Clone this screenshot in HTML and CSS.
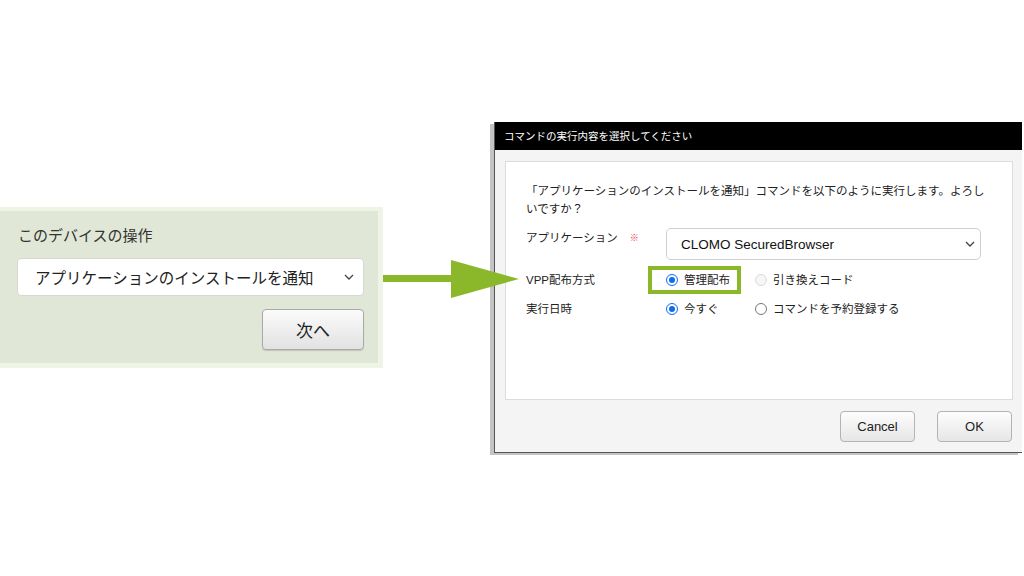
FILE: index.html
```html
<!DOCTYPE html>
<html lang="ja">
<head>
<meta charset="utf-8">
<title>コマンド</title>
<link rel="stylesheet" href="styles.css">
</head>
<body>
<div class="stage">
  <section class="device-panel">
    <div class="device-title">このデバイスの操作</div>
    <div class="device-select">
      <span>アプリケーションのインストールを通知</span>
      <svg class="chev" width="10" height="6" viewBox="0 0 10 6"><path d="M1 1l4 4 4-4" fill="none" stroke="#444" stroke-width="1.3"/></svg>
    </div>
    <div class="device-actions"><button class="next-btn">次へ</button></div>
  </section>

  <div class="arrow">
    <div class="arrow-line"></div>
    <div class="arrow-head"></div>
  </div>

  <section class="dialog">
    <header class="dialog-head">コマンドの実行内容を選択してください</header>
    <div class="dialog-body">
      <p class="message">「アプリケーションのインストールを通知」コマンドを以下のように実行します。よろしいですか？</p>
      <div class="form-row">
        <div class="label">アプリケーション<span class="req">※</span></div>
        <div class="app-select">
          <span>CLOMO SecuredBrowser</span>
          <svg class="chev" width="10" height="6" viewBox="0 0 10 6"><path d="M1 1l4 4 4-4" fill="none" stroke="#444" stroke-width="1.3"/></svg>
        </div>
      </div>
      <div class="form-row radio-row">
        <div class="label">VPP配布方式</div>
        <div class="options">
          <span class="opt highlight"><span class="radio on"></span>管理配布</span>
          <span class="opt"><span class="radio disabled"></span>引き換えコード</span>
        </div>
      </div>
      <div class="form-row radio-row">
        <div class="label">実行日時</div>
        <div class="options">
          <span class="opt"><span class="radio on"></span>今すぐ</span>
          <span class="opt"><span class="radio"></span>コマンドを予約登録する</span>
        </div>
      </div>
    </div>
    <footer class="dialog-foot">
      <button class="btn">Cancel</button>
      <button class="btn">OK</button>
    </footer>
  </section>
</div>
</body>
</html>
```

FILE: styles.css
```css
* { box-sizing: border-box; }
html, body { margin: 0; padding: 0; background: #fff; }
body {
  font-family: "Liberation Sans", "Noto Sans CJK JP", sans-serif;
  color: #222;
}
.stage {
  position: relative;
  width: 1024px;
  height: 576px;
  display: flex;
  align-items: flex-start;
}

/* left panel */
.device-panel {
  margin-top: 207px;
  width: 383px;
  height: 161px;
  background: #e1e7d6;
  border: 4px solid #eff4e4;
  border-left: 0;
  border-right-width: 5px;
  border-bottom-width: 5px;
  padding: 15px 14px 0 17px;
}
.device-title {
  font-size: 15px;
  line-height: 20px;
  color: #333;
  padding-left: 1px;
}
.device-select {
  margin-top: 12px;
  height: 38px;
  background: #fff;
  border: 1px solid #d6d9d0;
  border-radius: 4px;
  display: flex;
  align-items: center;
  justify-content: space-between;
  padding: 0 9px 0 17px;
  font-size: 15.5px;
  color: #222;
}
.device-actions {
  display: flex;
  justify-content: flex-end;
  margin-top: 13px;
}
.next-btn {
  width: 102px;
  height: 41px;
  font-family: inherit;
  font-size: 17px;
  color: #222;
  background: linear-gradient(#fbfbfb, #e2e2e2);
  border: 1px solid #a9a9a9;
  border-radius: 4px;
  box-shadow: 0 1px 1px rgba(0,0,0,0.15);
}

/* arrow overlay */
.arrow {
  position: absolute;
  left: 383px;
  top: 259px;
  width: 136px;
  height: 39px;
  display: flex;
  align-items: center;
  z-index: 2;
}
.arrow-line {
  width: 68px;
  height: 7px;
  background: #8ab82a;
}
.arrow-head {
  width: 0;
  height: 0;
  border-top: 19.5px solid transparent;
  border-bottom: 19.5px solid transparent;
  border-left: 68px solid #8ab82a;
}

/* dialog */
.dialog {
  margin-left: 111px;
  margin-top: 122px;
  width: 528px;
  height: 331px;
  background: #f4f4f4;
  border-left: 1px solid #555;
  border-bottom: 1px solid #555;
  box-shadow: -4px 2px 0 #c4c4c4;
  display: flex;
  flex-direction: column;
}
.dialog-head {
  height: 28px;
  background: #000;
  color: #fff;
  font-size: 10.5px;
  line-height: 28px;
  padding-left: 9px;
}
.dialog-body {
  margin: 11px 9px 0 10px;
  height: 239px;
  background: #fff;
  border: 1px solid #dcdcdc;
  padding: 20px 20px 0 20px;
  font-size: 11.5px;
  color: #222;
}
.message {
  margin: 0 0 10px;
  line-height: 18px;
}
.form-row {
  display: flex;
  align-items: flex-start;
}
.label {
  width: 140px;
  line-height: 20px;
  flex: none;
}
.req {
  color: #e23b3b;
  font-size: 9px;
  margin-left: 12px;
  vertical-align: 1px;
}
.app-select {
  width: 315px;
  height: 32px;
  border: 1px solid #cfcfcf;
  border-radius: 5px;
  display: flex;
  align-items: center;
  justify-content: space-between;
  padding: 0 5px 0 14px;
  font-size: 13.5px;
  color: #111;
}
.radio-row { margin-top: 10px; }
.radio-row + .radio-row { margin-top: 9px; }
.options {
  display: flex;
  line-height: 20px;
}
.opt {
  display: flex;
  align-items: center;
  gap: 6px;
}
.opt:first-child { width: 89px; }
.opt.highlight {
  width: 85px;
  outline: 4px solid #8ab82a;
  padding: 0 7px 0 14px;
  margin: 0 18px 0 -14px;
}
.radio {
  width: 12px;
  height: 12px;
  border-radius: 50%;
  border: 1px solid #777;
  background: #fff;
  flex: none;
  position: relative;
}
.radio.on {
  border: 1.5px solid #0a6cf0;
}
.radio.on::after {
  content: "";
  position: absolute;
  left: 1.5px;
  top: 1.5px;
  width: 6px;
  height: 6px;
  border-radius: 50%;
  background: #0a6cf0;
}
.radio.disabled {
  border-color: #dadada;
  background: #f6f6f6;
}

.dialog-foot {
  display: flex;
  justify-content: flex-end;
  gap: 22px;
  padding: 11px 10px 0 0;
}
.btn {
  width: 75px;
  height: 31px;
  font-family: inherit;
  font-size: 13px;
  color: #222;
  background: linear-gradient(#fdfdfd, #e6e6e6);
  border: 1px solid #b3b3b3;
  border-radius: 4px;
}
```
